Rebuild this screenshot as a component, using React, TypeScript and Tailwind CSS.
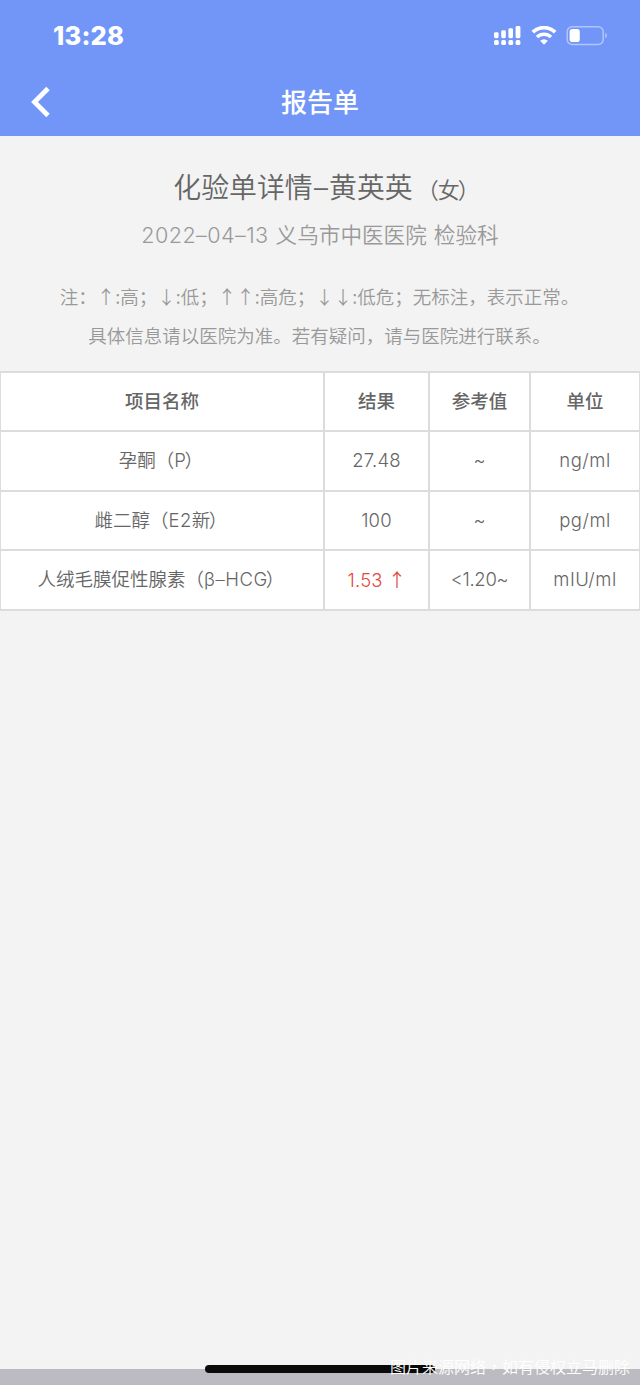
type ReportItem = {
  name: string;
  note: string;
  result: string;
  range: string;
  unit: string;
  abnormal?: boolean;
};

const items: ReportItem[] = [
  { name: '孕酮', note: 'P', result: '27.48', range: '~', unit: 'ng/ml' },
  { name: '雌二醇', note: 'E2新', result: '100', range: '~', unit: 'pg/ml' },
  {
    name: '人绒毛膜促性腺素',
    note: 'β–HCG',
    result: '1.53',
    range: '<1.20~',
    unit: 'mIU/ml',
    abnormal: true,
  },
];

function StatusBar() {
  return (
    <div className="flex h-[70px] items-center justify-between pt-px pl-[53px] pr-[32px]">
      <span className="text-[25.5px] leading-none font-extrabold tracking-[0.2px]">13:28</span>
      <div className="flex items-center">
        <svg className="h-[20px] w-[28px]" viewBox="0 0 28 20" fill="currentColor">
          <rect x="1" y="6.2" width="4.6" height="6" rx="1.4" />
          <rect x="8.2" y="4.3" width="4.6" height="7.9" rx="1.4" />
          <rect x="15.4" y="2.3" width="4.6" height="9.9" rx="1.4" />
          <rect x="22.6" y="0" width="4.8" height="12.2" rx="1.4" />
          <rect x="1" y="14.1" width="4.8" height="5" rx="1.6" />
          <rect x="8.2" y="14.1" width="4.8" height="5" rx="1.6" />
          <rect x="15.4" y="14.1" width="4.8" height="5" rx="1.6" />
          <rect x="22.6" y="14.1" width="4.8" height="5" rx="1.6" />
        </svg>
        <svg
          className="ml-[10px] h-[20px] w-[26px]"
          viewBox="0 0 26 20"
          fill="none"
          stroke="currentColor"
        >
          <path d="M1.8 6.2a16 16 0 0 1 22.4 0" strokeWidth="3.8" />
          <path d="M6 11a10 10 0 0 1 14 0" strokeWidth="3.5" />
          <path d="M9.2 14.8a5.4 5.4 0 0 1 7.6 0L13 18.8z" fill="currentColor" stroke="none" />
        </svg>
        <svg className="ml-[9px] h-[20px] w-[42px]" viewBox="0 0 42 20" fill="none">
          <rect
            x="1.2"
            y="0.8"
            width="36"
            height="17.6"
            rx="5"
            stroke="white"
            strokeOpacity="0.45"
            strokeWidth="1.5"
          />
          <path d="M39.3 6.8c2 .7 2 4.9 0 5.6z" fill="white" fillOpacity="0.5" />
          <rect x="3.6" y="3.1" width="10.2" height="13" rx="2.8" fill="white" />
        </svg>
      </div>
    </div>
  );
}

function NavBar() {
  return (
    <div className="grid h-[66px] grid-cols-[80px_1fr_80px] items-center">
      <button className="pb-[2px] pl-[30px]">
        <svg
          className="h-[32px] w-[20px]"
          viewBox="0 0 20 32"
          fill="none"
          stroke="currentColor"
          strokeWidth="4.8"
        >
          <path d="M18 2.5L4.5 16 18 29.5" />
        </svg>
      </button>
      <h1 className="text-center text-[26px] leading-none font-medium">报告单</h1>
    </div>
  );
}

export default function App() {
  return (
    <div className="flex h-[1385px] w-[640px] flex-col bg-[#f3f3f3] font-['Inter','Noto_Sans_CJK_SC',sans-serif] font-[350] text-[#666]">
      <header className="h-[136px] bg-[#7196f7] text-white">
        <StatusBar />
        <NavBar />
      </header>

      <main className="flex-1">
        {/* Report summary */}
        <div className="pt-[32px] text-center">
          <h2 className="h-[40px] pl-[13px] text-[27.9px] leading-[40px] whitespace-nowrap">
            化验单详情<span className="mx-[1.2px]">–</span>黄英英
            <span className="ml-[4px] text-[22px]">
              （<span className="mr-[-2px] ml-[-1px]">女</span>）
            </span>
          </h2>
          <p className="mt-[11px] h-[32px] text-[21.6px] leading-[32px] text-[#999] [word-spacing:1px]">
            <span className="tracking-[0.4px]">2022–04–13</span> 义乌市中医医院 检验科
          </p>
          <div className="mt-[26px] pr-[1px] font-['Noto_Sans_CJK_SC',sans-serif] text-[18.5px] leading-[39px] whitespace-nowrap text-[#999]">
            <p>注：↑:高；↓:低；↑↑:高危；↓↓:低危；无标注，表示正常。</p>
            <p>具体信息请以医院为准。若有疑问，请与医院进行联系。</p>
          </div>
        </div>

        <table className="mt-[16px] w-full table-fixed border-separate border-spacing-0 border-t-2 border-l border-[#dcdcdc] bg-white text-center text-[18.5px] tracking-[0.2px]">
          <colgroup>
            <col className="w-[324px]" />
            <col className="w-[105px]" />
            <col className="w-[101px]" />
            <col className="w-[109px]" />
          </colgroup>
          <thead>
            <tr className="h-[59px]">
              {['项目名称', '结果', '参考值', '单位'].map((title) => (
                <th
                  key={title}
                  className="border-r-2 border-b-2 border-[#dcdcdc] p-0 font-medium tracking-normal last:border-r"
                >
                  {title}
                </th>
              ))}
            </tr>
          </thead>
          <tbody>
            {items.map((item) => (
              <tr key={item.name} className="h-[59.7px]">
                <td className="border-r-2 border-b-2 border-[#dcdcdc] p-0 pr-[2px]">
                  <span className="tracking-normal">{item.name}（</span>
                  <span className="mr-[-2px] tracking-[0.5px]">{item.note}</span>）
                </td>
                <td
                  className={`border-r-2 border-b-2 border-[#dcdcdc] p-0 ${item.abnormal ? 'text-[#e2493d]' : ''}`}
                >
                  {item.result}
                  {item.abnormal && (
                    <span className="ml-[5px] mr-[-1px] font-['Noto_Sans_CJK_SC',sans-serif]">↑</span>
                  )}
                </td>
                <td className="border-r-2 border-b-2 border-[#dcdcdc] p-0 tracking-[-0.3px]">
                  {item.range}
                </td>
                <td className="border-r border-b-2 border-[#dcdcdc] p-0 tracking-[0.5px]">
                  {item.unit}
                </td>
              </tr>
            ))}
          </tbody>
        </table>
      </main>

      {/* Home indicator and source note */}
      <footer className="relative h-[16px] bg-[#bcbbc1]">
        <div className="absolute top-[-4px] left-[205px] h-[8px] w-[230px] rounded-full bg-[#0a0a0a]" />
        <p className="absolute right-[10px] bottom-[7px] font-['Noto_Sans_CJK_SC',sans-serif] text-[16px] leading-[24px] whitespace-nowrap text-white">
          图片来源网络<span className="font-['Noto_Sans_CJK_TC',sans-serif]" lang="zh-TW">，</span>如有侵权立马删除
        </p>
      </footer>
    </div>
  );
}
